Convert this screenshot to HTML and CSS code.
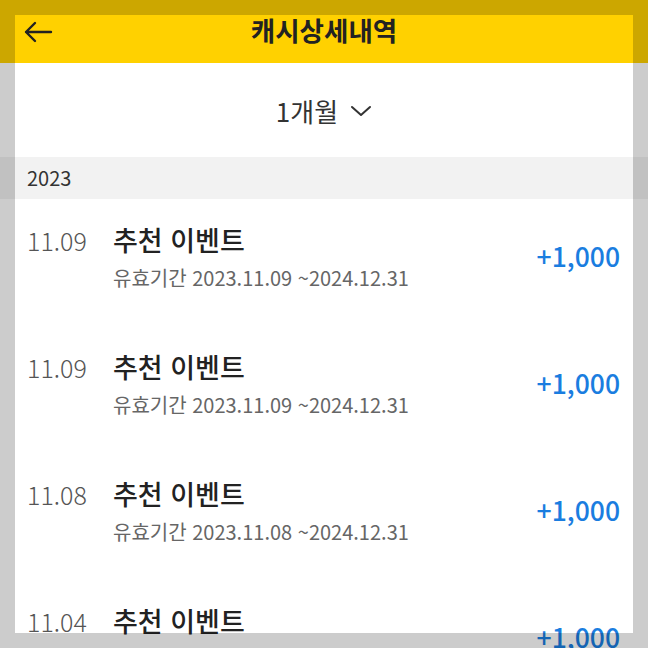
FILE: index.html
```html
<!DOCTYPE html>
<html lang="ko">
<head>
    <meta charset="UTF-8">
    <meta name="viewport" content="width=device-width, initial-scale=1.0">
    <title>캐시상세내역</title>
    <link rel="stylesheet" href="styles.css">
</head>
<body>
    <header class="topbar">
        <a class="back" href="#">
            <svg width="30" height="24" viewBox="0 0 30 24">
                <path d="M28 12H3M12 3L3 12L12 21" fill="none" stroke="#222" stroke-width="2.4" stroke-linecap="round" stroke-linejoin="round"/>
            </svg>
        </a>
        <h1>캐시상세내역</h1>
    </header>

    <div class="period">
        <span>1개월</span>
        <svg width="22" height="14" viewBox="0 0 22 14">
            <path d="M2 3L11 11L20 3" fill="none" stroke="#333" stroke-width="2" stroke-linecap="round" stroke-linejoin="round"/>
        </svg>
    </div>

    <div class="year">2023</div>

    <ul class="list">
        <li class="item">
            <div class="date">11.09</div>
            <div class="info">
                <div class="name">추천 이벤트</div>
                <div class="valid">유효기간 2023.11.09 ~2024.12.31</div>
            </div>
            <div class="amount">+1,000</div>
        </li>
        <li class="item">
            <div class="date">11.09</div>
            <div class="info">
                <div class="name">추천 이벤트</div>
                <div class="valid">유효기간 2023.11.09 ~2024.12.31</div>
            </div>
            <div class="amount">+1,000</div>
        </li>
        <li class="item">
            <div class="date">11.08</div>
            <div class="info">
                <div class="name">추천 이벤트</div>
                <div class="valid">유효기간 2023.11.08 ~2024.12.31</div>
            </div>
            <div class="amount">+1,000</div>
        </li>
        <li class="item">
            <div class="date">11.04</div>
            <div class="info">
                <div class="name">추천 이벤트</div>
                <div class="valid">유효기간 2023.11.04 ~2024.12.31</div>
            </div>
            <div class="amount">+1,000</div>
        </li>
    </ul>

    <div class="dim"></div>
</body>
</html>
```

FILE: styles.css
```css
body {
    margin: 0;
    font-family: "Noto Sans CJK KR", "Noto Sans", sans-serif;
    background-color: #fff;
    color: #222;
    overflow: hidden;
    height: 648px;
}
.topbar {
    display: flex;
    align-items: center;
    justify-content: center;
    position: relative;
    height: 63px;
    background-color: #ffd100;
}
.topbar h1 {
    margin: 0 0 4px;
    font-size: 26.5px;
    font-weight: bold;
    color: #222;
    line-height: 56px;
}
.back {
    position: absolute;
    left: 23px;
    top: 20px;
    display: flex;
}
.period {
    display: flex;
    align-items: center;
    justify-content: center;
    gap: 12px;
    height: 94px;
    font-size: 26px;
    color: #333;
}
.period svg {
    margin-top: 2px;
}
.year {
    height: 42px;
    line-height: 42px;
    padding-left: 27px;
    background-color: #f2f2f2;
    font-size: 20px;
    color: #333;
}
.list {
    list-style: none;
    margin: 0;
    padding: 0;
}
.item {
    display: flex;
    align-items: center;
    height: 127px;
    box-sizing: border-box;
    padding: 0 28px 16px 27px;
}
.date {
    width: 86px;
    align-self: flex-start;
    margin-top: 25px;
    font-size: 25px;
    font-weight: 300;
    line-height: 32px;
    color: #555;
}
.info {
    flex: 1;
    display: flex;
    flex-direction: column;
    gap: 7px;
    align-self: flex-start;
    margin-top: 24px;
}
.name {
    font-size: 27px;
    font-weight: 500;
    line-height: 34px;
    color: #222;
}
.valid {
    font-size: 20px;
    line-height: 28px;
    color: #666;
}
.amount {
    margin-top: 2px;
    font-size: 26.5px;
    font-weight: 500;
    color: #1a7de0;
}
.dim {
    position: fixed;
    inset: 0;
    border: 15px solid rgba(0, 0, 0, 0.2);
    pointer-events: none;
}
```
